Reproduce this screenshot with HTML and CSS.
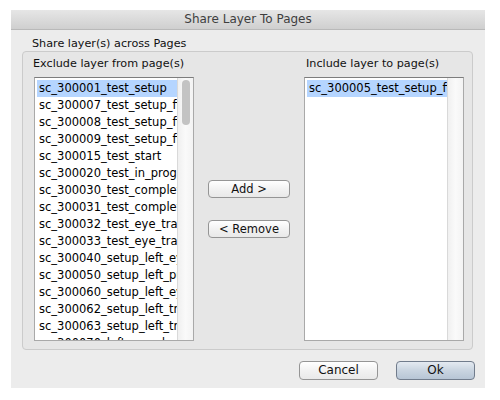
FILE: index.html
```html
<!DOCTYPE html>
<html>
<head>
<meta charset="utf-8">
<link rel="stylesheet" href="styles.css">
</head>
<body>
<div class="window">
  <div class="titlebar">Share Layer To Pages</div>
  <div class="heading">Share layer(s) across Pages</div>
  <div class="group">
    <div class="col">
      <div class="label">Exclude layer from page(s)</div>
      <div class="listbox">
        <div class="items">
          <div class="row selected">sc_300001_test_setup</div>
          <div class="row">sc_300007_test_setup_final</div>
          <div class="row">sc_300008_test_setup_final</div>
          <div class="row">sc_300009_test_setup_final</div>
          <div class="row">sc_300015_test_start</div>
          <div class="row">sc_300020_test_in_progress</div>
          <div class="row">sc_300030_test_complete</div>
          <div class="row">sc_300031_test_complete</div>
          <div class="row">sc_300032_test_eye_tracking</div>
          <div class="row">sc_300033_test_eye_tracking</div>
          <div class="row">sc_300040_setup_left_eye</div>
          <div class="row">sc_300050_setup_left_pupil</div>
          <div class="row">sc_300060_setup_left_eye</div>
          <div class="row">sc_300062_setup_left_track</div>
          <div class="row">sc_300063_setup_left_track</div>
          <div class="row">sc_300070_left_eye_done</div>
        </div>
        <div class="track"><div class="thumb"></div></div>
      </div>
    </div>
    <div class="mid">
      <button class="btn add">Add &gt;</button>
      <button class="btn remove">&lt; Remove</button>
    </div>
    <div class="col">
      <div class="label">Include layer to page(s)</div>
      <div class="listbox">
        <div class="items">
          <div class="row selected">sc_300005_test_setup_final</div>
        </div>
        <div class="track"></div>
      </div>
    </div>
  </div>
  <div class="footer">
    <button class="btn dlg">Cancel</button>
    <button class="btn dlg default">Ok</button>
  </div>
</div>
</body>
</html>
```
FILE: styles.css
```css
html, body {
  margin: 0;
  padding: 0;
  background: #ffffff;
}
body {
  font-family: "DejaVu Sans", "Liberation Sans", sans-serif;
  color: #111;
}
.window {
  margin: 10px 0 0 11px;
  width: 474px;
  height: 378px;
  background: #ececec;
  display: flex;
  flex-direction: column;
}
.titlebar {
  height: 20px;
  line-height: 19px;
  text-align: center;
  font-size: 12px;
  color: #3e3e3e;
  background: linear-gradient(#e6e6e6, #cfcfcf);
  border-bottom: 1px solid #b9b9b9;
  box-sizing: border-box;
}
.heading {
  font-size: 11.2px;
  line-height: 13px;
  padding: 7px 0 0 21px;
}
.group {
  margin: 1px 0 0 11px;
  width: 451px;
  height: 299px;
  box-sizing: border-box;
  border: 1px solid #cbcbcb;
  border-radius: 4px;
  background: #e6e6e6;
  display: grid;
  grid-template-columns: 161px 1fr 160px;
  padding: 5px 8px 0 10px;
}
.label {
  font-size: 11.2px;
  line-height: 13px;
  white-space: nowrap;
}
.col .listbox {
  margin-top: 7px;
}
.col:first-child .listbox {
  margin-left: 1px;
}
.col:last-child .label {
  margin-left: 2px;
}
.listbox {
  width: 160px;
  height: 264px;
  box-sizing: border-box;
  background: #fff;
  border: 1px solid #a9a9a9;
  border-top-color: #7d7d7d;
  display: flex;
  overflow: hidden;
}
.items {
  flex: 1;
  overflow: hidden;
  padding: 2px 0 0 2px;
}
.row {
  height: 17px;
  line-height: 17px;
  font-size: 11.5px;
  white-space: nowrap;
  overflow: hidden;
  padding-left: 2px;
  color: #000;
}
.row.selected {
  background: #b5d5ff;
}
.track {
  width: 16px;
  border-left: 1px solid #d9d9d9;
  background: linear-gradient(90deg, #f0f0f0, #fafafa 50%, #f3f3f3);
  box-sizing: border-box;
  padding: 2px 3px 0 4px;
}
.thumb {
  height: 45px;
  border-radius: 4px;
  background: #c3c3c3;
}
.mid {
  display: flex;
  flex-direction: column;
  align-items: center;
  padding-top: 123px;
  gap: 22px;
}
.btn {
  font-family: "DejaVu Sans", "Liberation Sans", sans-serif;
  font-size: 11.5px;
  color: #111;
  border: 1px solid #959595;
  border-radius: 4px;
  background: linear-gradient(#ffffff, #f2f2f2 50%, #e9e9e9);
  padding: 0;
  margin: 0;
  box-sizing: border-box;
}
.mid .btn {
  width: 82px;
  height: 18px;
  line-height: 16px;
}
.footer {
  display: flex;
  justify-content: flex-end;
  gap: 18px;
  padding: 11px 10px 0 0;
}
.dlg {
  width: 79px;
  height: 19px;
  line-height: 17px;
  font-size: 12px;
}
.default {
  background: linear-gradient(#e4eaf1, #c9d4e0 50%, #b7c5d5);
  border-color: #717c8c;
}
```
